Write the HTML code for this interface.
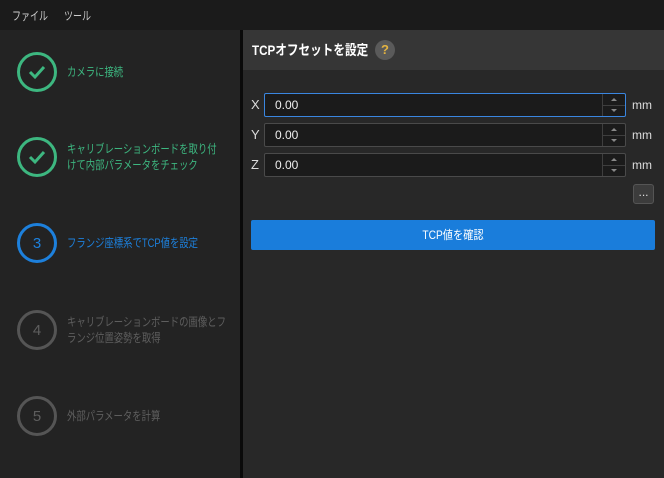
<!DOCTYPE html>
<html><head><meta charset="utf-8"><style>
*{margin:0;padding:0;box-sizing:border-box}
body{width:664px;height:478px;overflow:hidden;background:#282828;font-family:"Liberation Sans","Noto Sans CJK JP",sans-serif;font-size:12px;position:relative}
.menu{position:absolute;left:0;top:0;width:664px;height:30px;background:#1b1b1b;color:#ccc}
.menu span{position:absolute;top:7px;transform:scaleX(0.75);transform-origin:0 0;white-space:nowrap}
.left{position:absolute;left:0;top:30px;width:240px;height:448px;background:#232323}
.sep{position:absolute;left:240px;top:30px;width:3px;height:448px;background:#0a0a0a}
.step{position:absolute;left:17px;width:40px;height:40px;border-radius:50%;border:3px solid;display:flex;align-items:center;justify-content:center;font-size:15px}
.lbl{position:absolute;left:67px;line-height:16px;white-space:nowrap;transform:scaleX(0.78);transform-origin:0 0}
.g{color:#3db780;border-color:#3db780}
.b{color:#1d80dc;border-color:#1d80dc}
.d{color:#5e5e5e;border-color:#555}
.hdr{position:absolute;left:243px;top:30px;width:421px;height:40px;background:#363636}
.hdr .t{position:absolute;left:9px;top:10px;color:#fff;font-weight:bold;font-size:14px;white-space:nowrap;transform:scaleX(0.83);transform-origin:0 0}
.q{position:absolute;left:132px;top:10px;width:20px;height:20px;border-radius:50%;background:#5a5a5a;color:#e3b341;font-weight:bold;text-align:center;line-height:20px;font-size:13px}
.ax{position:absolute;left:251px;color:#ddd;font-size:13px}
.inp{position:absolute;left:264px;width:362px;height:24px;background:#1b1b1b;border:1px solid #4a4a4a;border-radius:2px;color:#eee}
.inp.f{border-color:#3a86e0}
.inp .v{position:absolute;left:10px;top:4px}
.sp{position:absolute;right:0;top:0;width:23px;height:22px;border-left:1px solid #3e3e3e}
.sp:after{content:"";position:absolute;left:0;right:0;top:11px;border-top:1px solid #3e3e3e}
.sp i{position:absolute;left:8px;width:0;height:0;border-left:3px solid transparent;border-right:3px solid transparent}
.mm{position:absolute;left:632px;color:#ddd}
.dots{position:absolute;left:633px;top:184px;width:21px;height:20px;background:#3c3c3c;border:1px solid #555;border-radius:3px;color:#ddd;text-align:center;line-height:14px}
.btn{position:absolute;left:251px;top:220px;width:404px;height:30px;background:#1a7ddb;border-radius:2px;color:#fff;text-align:center;line-height:30px}
.btn span{display:inline-block;transform:scaleX(0.85)}
</style></head><body>
<div class="menu"><span style="left:12px">ファイル</span><span style="left:64px">ツール</span></div>
<div class="left">
<div class="step g" style="top:22px"><svg width="22" height="22" viewBox="0 0 22 22"><path d="M4 11l5 5 9-10" fill="none" stroke="#3db780" stroke-width="3"/></svg></div>
<div class="lbl g" style="top:34px">カメラに接続</div>
<div class="step g" style="top:107px"><svg width="22" height="22" viewBox="0 0 22 22"><path d="M4 11l5 5 9-10" fill="none" stroke="#3db780" stroke-width="3"/></svg></div>
<div class="lbl g" style="top:111px">キャリブレーションボードを取り付<br>けて内部パラメータをチェック</div>
<div class="step b" style="top:193px">3</div>
<div class="lbl b" style="top:205px">フランジ座標系でTCP値を設定</div>
<div class="step d" style="top:280px">4</div>
<div class="lbl d" style="top:284px">キャリブレーションボードの画像とフ<br>ランジ位置姿勢を取得</div>
<div class="step d" style="top:366px">5</div>
<div class="lbl d" style="top:378px">外部パラメータを計算</div>
</div>
<div class="sep"></div>
<div class="hdr"><span class="t">TCPオフセットを設定</span><span class="q">?</span></div>
<div class="ax" style="top:97px">X</div>
<div class="inp f" style="top:93px"><span class="v">0.00</span><div class="sp"><i style="top:4px;border-bottom:3px solid #888"></i><i style="top:15px;border-top:3px solid #888"></i></div></div>
<div class="mm" style="top:98px">mm</div>
<div class="ax" style="top:127px">Y</div>
<div class="inp" style="top:123px"><span class="v">0.00</span><div class="sp"><i style="top:4px;border-bottom:3px solid #888"></i><i style="top:15px;border-top:3px solid #888"></i></div></div>
<div class="mm" style="top:128px">mm</div>
<div class="ax" style="top:157px">Z</div>
<div class="inp" style="top:153px"><span class="v">0.00</span><div class="sp"><i style="top:4px;border-bottom:3px solid #888"></i><i style="top:15px;border-top:3px solid #888"></i></div></div>
<div class="mm" style="top:158px">mm</div>
<div class="dots">...</div>
<div class="btn"><span>TCP値を確認</span></div>
</body></html>
